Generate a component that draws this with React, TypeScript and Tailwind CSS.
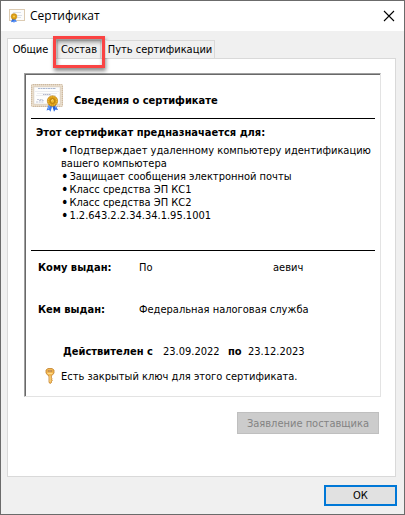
import type { ReactNode } from 'react';
import { clsx } from 'clsx';

const purposes = [
  'Подтверждает удаленному компьютеру идентификацию вашего компьютера',
  'Защищает сообщения электронной почты',
  'Класс средства ЭП КС1',
  'Класс средства ЭП КС2',
  '1.2.643.2.2.34.34.1.95.1001',
];

function CertificateIcon({ className }: { className?: string }) {
  return (
    <svg viewBox="0 0 32 28" className={className} aria-hidden="true">
      <rect x="0.5" y="0.5" width="31" height="22" rx="1" fill="#e4d6c2" stroke="#cdb9a0" />
      <rect x="1" y="1" width="30" height="21" fill="none" stroke="#f3ebdf" strokeDasharray="1 1" />
      <rect x="3" y="3" width="26" height="17" fill="#fdfdfd" stroke="#d8d4cf" strokeWidth="0.5" />
      <path d="M7 4.5h18" stroke="#a9b7d0" strokeDasharray="2 0.5" />
      <path d="M4 7.5h24M6 9.5h20M5 11.5h20" stroke="#e2e4ea" strokeWidth="0.7" />
      <path d="M12 10.5h8" stroke="#b4b7ca" strokeDasharray="1.5 0.5" />
      <path d="M6 15.5h6M5 18h8M8 16.5h5" stroke="#b3b7cc" strokeWidth="0.8" strokeDasharray="2 0.7" />
      <path d="M18 20l-2.5 6.5 2.5-.8 1.5 2 2-6.5z" fill="#3d7cec" />
      <path d="M24 20l3 6-2.5-.5-1.5 2.2-2-6.7z" fill="#2561da" />
      <path d="M18.5 21l-1 4M24 21l1 3.5" stroke="#8db7ff" strokeWidth="0.8" />
      <circle cx="21.5" cy="17" r="5.2" fill="#d99a14" stroke="#b9790a" strokeWidth="0.6" />
      <circle cx="21.5" cy="17" r="4.3" fill="none" stroke="#f5c84a" strokeWidth="0.9" strokeDasharray="1.2 0.8" />
      <circle cx="21.5" cy="17" r="2.3" fill="#f1b92c" stroke="#a46b08" strokeWidth="0.7" />
      <path d="M20.5 16.5l1.5-1" stroke="#ffe9a0" strokeWidth="0.8" />
    </svg>
  );
}

function SmallCertificateIcon({ className }: { className?: string }) {
  return (
    <svg viewBox="0 0 16 14" className={className} aria-hidden="true">
      <rect x="0.5" y="0.5" width="15" height="11" fill="#fcfcfc" stroke="#dccbb2" />
      <path d="M4 3.5h8M7 6.5h6M8 8.5h4" stroke="#ccd3e0" strokeWidth="0.7" />
      <path d="M3.5 9L2 13.2l1.6-.4.9 1L5.5 9z" fill="#2f6fe6" />
      <path d="M6 9l1.8 4-1.5-.3-.9 1L4.5 9z" fill="#4a86f0" />
      <circle cx="5" cy="7.5" r="2.9" fill="#dc9f16" stroke="#b67a0c" strokeWidth="0.4" />
      <circle cx="5" cy="7.5" r="1" fill="#f7cf58" />
    </svg>
  );
}

function KeyIcon({ className }: { className?: string }) {
  return (
    <svg viewBox="0 0 10 16" className={className} aria-hidden="true">
      <path
        d="M3 .5h4l2 1.500v3L7 7.500 6.300 8v2l1 .8-.8.9.8.9-.8.9v1l-1.200 1-1.300-1V8L3 7.500 1 5V2z"
        fill="#f3b850"
        stroke="#c07f2c"
        strokeWidth="0.8"
        strokeLinejoin="round"
      />
      <path d="M3 2.500h4v1H3z" fill="#fff" stroke="#a86a20" strokeWidth="0.600" />
      <path d="M2.500 5.500h5" stroke="#ffe19a" strokeWidth="0.800" />
      <path d="M5 8v6" stroke="#ffe3a0" strokeWidth="0.800" />
    </svg>
  );
}

interface TabProps {
  active?: boolean;
  highlighted?: boolean;
  className?: string;
  children: ReactNode;
}

function Tab({ active, highlighted, className, children }: TabProps) {
  return (
    <button
      type="button"
      role="tab"
      aria-selected={!!active}
      className={clsx(
        'relative border border-b-0 border-[#d9d9d9] whitespace-nowrap',
        active ? '-mb-px h-[21px] bg-white' : 'h-[18px] bg-[#f0f0f0]',
        className
      )}
    >
      {children}
      {highlighted && (
        <span className="pointer-events-none absolute -inset-x-[5px] -top-[5px] -bottom-[10px] border-3 border-[#fa4343] shadow-[1px_3px_4px_rgba(0,0,0,0.45),inset_1px_3px_4px_rgba(0,0,0,0.4)]" />
      )}
    </button>
  );
}

export default function App() {
  return (
    <div className="border border-[#6b6b6b] bg-[#f0f0f0] font-['DejaVu_Sans_Condensed','DejaVu_Sans',sans-serif] text-[11px] leading-[13px] text-black">
      <header className="flex h-[30px] items-center bg-white px-2">
        <SmallCertificateIcon className="mr-[5px] h-[14px] w-4" />
        <h1 className="grow font-['Open_Sans',sans-serif] text-xs">Сертификат</h1>
        <button type="button" aria-label="Закрыть" className="p-px">
          <svg viewBox="0 0 12 12" className="size-3" aria-hidden="true">
            <path d="M1 1l10 10M11 1L1 11" stroke="#000" strokeWidth="1.1" />
          </svg>
        </button>
      </header>

      <main className="pt-[7px] pr-2 pl-[6px]">
        <div role="tablist" className="flex h-5 items-end">
          <Tab active className="w-[47px]">
            Общие
          </Tab>
          <Tab highlighted className="ml-[3px] w-11">
            Состав
          </Tab>
          <Tab className="ml-1 w-[110px]">Путь сертификации</Tab>
        </div>

        <section role="tabpanel" className="border border-[#d9d9d9] bg-white px-4 pt-[14px] pb-[42px]">
          <div className="mr-[-2px] border border-t-[#a0a0a0] border-r-[#e3e3e3] border-b-[#e3e3e3] border-l-[#a0a0a0]">
            <div className="border-t border-l border-[#696969] px-[5px] pb-3">
              <div className="flex h-11 items-start border-b border-black pt-[9px]">
                <CertificateIcon className="h-7 w-8 shrink-0" />
                <h2 className="mt-[10px] ml-[11px] font-bold">Сведения о сертификате</h2>
              </div>

              <div className="h-[132px] border-b border-black pt-[7px] pl-[5px]">
                <h3 className="font-bold">Этот сертификат предназначается для:</h3>
                <ul className="mt-[5px] pl-[25px]">
                  {purposes.map((purpose) => (
                    <li
                      key={purpose}
                      className="before:mr-px before:align-[-1px] before:text-sm before:leading-[0px] before:content-['•']"
                    >
                      {purpose}
                    </li>
                  ))}
                </ul>
              </div>

              <dl className="grid grid-cols-[101px_1fr] gap-y-[29px] pt-[10px] pl-[7px]">
                <dt className="font-bold">Кому выдан:</dt>
                <dd className="flex">
                  <span className="w-[134px]">По</span>
                  <span>аевич</span>
                </dd>
                <dt className="font-bold">Кем выдан:</dt>
                <dd>Федеральная налоговая служба</dd>
              </dl>

              <p className="mt-[29px] flex pl-8">
                <b className="w-[100px]">Действителен с</b>
                <span className="w-[65px]">23.09.2022</span>
                <b className="w-5">по</b>
                <span>23.12.2023</span>
              </p>
              <p className="mt-[10px] flex items-center pl-[14px]">
                <KeyIcon className="mr-[6px] h-4 w-[10px]" />
                Есть закрытый ключ для этого сертификата.
              </p>
            </div>
          </div>

          <div className="mt-[15px] flex justify-end">
            <button
              type="button"
              disabled
              className="h-[22px] w-[142px] border border-[#bfbfbf] bg-[#cccccc] text-[#838383]"
            >
              Заявление поставщика
            </button>
          </div>
        </section>
      </main>

      <footer className="flex justify-end py-2 pr-[7px]">
        <button type="button" className="h-[21px] w-[73px] border-2 border-[#0078d7] bg-[#e1e1e1]">
          ОК
        </button>
      </footer>
    </div>
  );
}
